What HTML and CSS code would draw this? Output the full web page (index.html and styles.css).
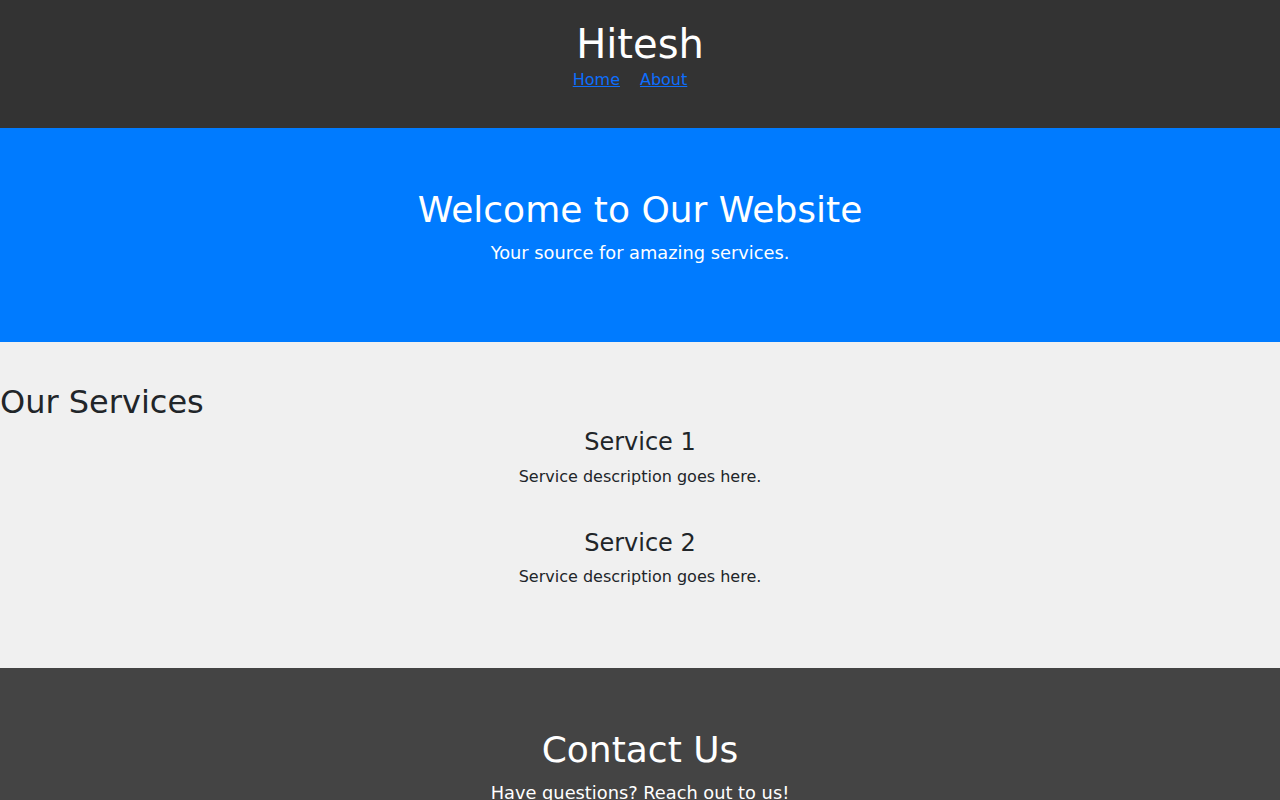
FILE: index.html
```html
<!DOCTYPE html>
<html lang="en">
<head>
<meta charset="utf-8">
<title>Hitesh</title>
<link rel="stylesheet" href="styles.css">
</head>
<body>
<header class="site-header">
  <h1 class="site-title">Hitesh</h1>
  <nav>
    <ul class="nav-list">
      <li class="nav-item"><a href="#">Home</a></li>
      <li class="nav-item"><a href="#">About</a></li>
    </ul>
  </nav>
</header>
<section class="hero">
  <h2 class="hero-title">Welcome to Our Website</h2>
  <p class="hero-text">Your source for amazing services.</p>
</section>
<section class="services">
  <h2 class="services-title">Our Services</h2>
  <div class="service">
    <h3 class="service-title">Service 1</h3>
    <p class="service-text">Service description goes here.</p>
  </div>
  <div class="service">
    <h3 class="service-title">Service 2</h3>
    <p class="service-text">Service description goes here.</p>
  </div>
</section>
<footer class="contact">
  <h2 class="hero-title">Contact Us</h2>
  <p class="hero-text">Have questions? Reach out to us!</p>
</footer>
</body>
</html>
```
FILE: styles.css
```css
html, body {
  margin: 0;
  padding: 0;
}
body {
  font-family: "DejaVu Sans", sans-serif;
  line-height: 1.5;
  color: #212529;
  background: #f0f0f0;
}
h1, h2, h3 {
  font-weight: 400;
  line-height: 1.2;
  margin: 0 0 8px;
}
p {
  margin: 0 0 16px;
}
.site-header {
  background: #333333;
  color: #ffffff;
  text-align: center;
  padding: 20px;
}
.site-title {
  font-size: 40px;
  margin: 0;
}
.nav-list {
  list-style: none;
  padding: 0;
  margin: 0 0 16px;
  display: flex;
  justify-content: center;
}
.nav-item {
  margin-right: 20px;
}
.nav-list a {
  color: #0d6efd;
  font-size: 16px;
}
.hero {
  background: #007bff;
  color: #ffffff;
  text-align: center;
  padding: 60px 20px 59px;
}
.hero-title {
  font-size: 36px;
  margin-bottom: 9px;
}
.hero-text {
  font-size: 17.8px;
}
.services {
  padding: 41px 0 39px;
}
.services-title {
  font-size: 32px;
  margin-bottom: 7px;
}
.service {
  text-align: center;
  margin-bottom: 40px;
}
.service-title {
  font-size: 24px;
  margin-bottom: 7.5px;
}
.service-text {
  font-size: 16px;
}
.contact {
  background: #444444;
  color: #ffffff;
  text-align: center;
  padding: 60px 20px 59px;
}
```
